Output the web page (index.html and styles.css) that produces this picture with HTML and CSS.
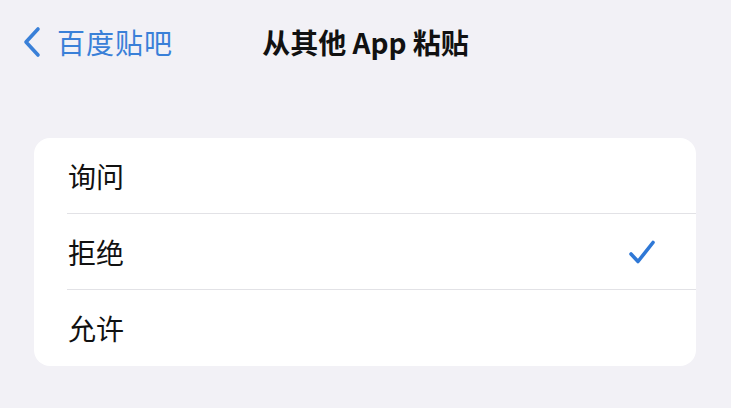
FILE: index.html
```html
<!DOCTYPE html>
<html lang="zh">
<head>
<meta charset="utf-8">
<link rel="stylesheet" href="styles.css">
</head>
<body>
<div class="page">
  <header class="nav">
    <div class="back">
      <svg class="chev" width="20" height="32" viewBox="0 0 20 32"><path d="M16 3 L4 16 L16 29" fill="none" stroke="#3a80d8" stroke-width="3.6" stroke-linecap="round" stroke-linejoin="round"/></svg>
      <span class="back-text">百度贴吧</span>
    </div>
    <div class="title">从其他 App 粘贴</div>
  </header>
  <section class="card">
    <div class="row"><div class="row-inner"><span class="label">询问</span></div></div>
    <div class="row"><div class="row-inner"><span class="label">拒绝</span>
      <svg class="check" width="28" height="26" viewBox="0 0 28 26"><path d="M3 15 L10 22.5 L25 3.5" fill="none" stroke="#2f78d6" stroke-width="3.6" stroke-linecap="round" stroke-linejoin="round"/></svg>
    </div></div>
    <div class="row last"><div class="row-inner"><span class="label">允许</span></div></div>
  </section>
</div>
</body>
</html>
```
FILE: styles.css
```css
html, body {
  margin: 0;
  padding: 0;
  background: #f2f1f6;
}
body {
  font-family: "Noto Sans CJK SC", "Noto Sans", sans-serif;
  width: 731px;
  height: 408px;
  overflow: hidden;
}
.page {
  display: flex;
  flex-direction: column;
}
.nav {
  position: relative;
  height: 84px;
  display: flex;
  align-items: center;
  justify-content: center;
}
.back {
  position: absolute;
  left: 22px;
  top: 0;
  height: 84px;
  display: flex;
  align-items: center;
  gap: 15px;
}
.chev { display: block; margin-top: -1px; }
.back-text {
  color: #3a80d8;
  font-size: 28px;
  line-height: 1;
  letter-spacing: 1px;
}
.title {
  font-size: 28px;
  font-weight: 700;
  color: #111;
  line-height: 1;
}
.card {
  margin: 54px 35px 0 34px;
  background: #fff;
  border-radius: 16px;
  display: flex;
  flex-direction: column;
}
.row {
  padding-left: 33px;
}
.row-inner {
  height: 75px;
  border-bottom: 1px solid #e2e2e6;
  display: flex;
  align-items: center;
  justify-content: space-between;
  padding-left: 1px;
  padding-right: 40px;
}
.row.last .row-inner { border-bottom: none; height: 76px; }
.label {
  font-size: 28px;
  color: #111;
  line-height: 1;
}
.check { display: block; }
```
